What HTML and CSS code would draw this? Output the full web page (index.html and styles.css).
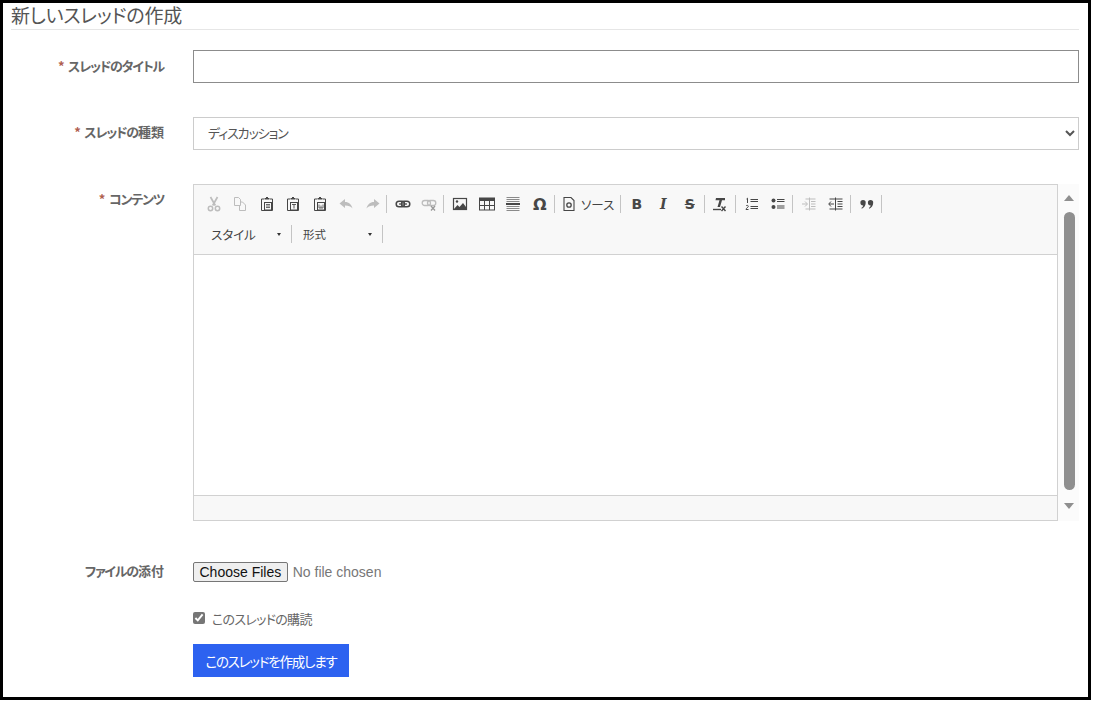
FILE: index.html
```html
<!DOCTYPE html>
<html lang="ja">
<head>
<meta charset="utf-8">
<title>新しいスレッドの作成</title>
<link rel="stylesheet" href="styles.css">
</head>
<body>
<main class="frame">
  <h1 class="title">新しいスレッドの作成</h1>
  <form class="form">
    <div class="row row-title">
      <label class="label" for="t"><span class="req">*</span> スレッドのタイトル</label>
      <input class="text-input" id="t" type="text">
    </div>
    <div class="row row-type">
      <label class="label" for="k"><span class="req">*</span> スレッドの<span class="kj">種類</span></label>
      <select class="select" id="k"><option>ディスカッション</option></select>
    </div>
    <div class="row row-content">
      <label class="label label-content"><span class="req">*</span> コンテンツ</label>
      <div class="editor-wrap">
        <div class="editor">
          <div class="toolbar">
            <div class="tool-line">
              <span class="btn dim"><svg viewBox="0 0 16 16"><path d="M4.500 1l4.800 8.500M11.500 1L6.700 9.500" fill="none" stroke="currentColor" stroke-width="1.700"/><circle cx="4.500" cy="12.500" r="2.200" fill="none" stroke="currentColor" stroke-width="1.500"/><circle cx="11.500" cy="12.500" r="2.200" fill="none" stroke="currentColor" stroke-width="1.500"/></svg></span>
              <span class="btn dim"><svg viewBox="0 0 16 16"><path d="M2.500 1.500h4l2 2v6h-6zM8.500 6h2l3 3v5.500h-6v-5" fill="none" stroke="currentColor" stroke-width="1"/></svg></span>
              <span class="btn"><svg viewBox="0 0 16 16"><path d="M5 3H2.500v11.500h11V3H11" fill="none" stroke="currentColor"/><path d="M5.500 3.500V2h1.500V1h2v1h1.500v1.500z" fill="currentColor"/><rect x="5.500" y="6.500" width="7" height="7.500" fill="#f8f8f8" stroke="currentColor"/><path d="M7 8.500h4M7 10h4M7 11.500h4" stroke="currentColor" stroke-width=".8"/></svg></span>
              <span class="btn"><svg viewBox="0 0 16 16"><path d="M5 3H2.500v11.500h11V3H11" fill="none" stroke="currentColor"/><path d="M5.500 3.500V2h1.500V1h2v1h1.500v1.500z" fill="currentColor"/><rect x="5.500" y="6.500" width="7" height="7.500" fill="#f8f8f8" stroke="currentColor"/><path d="M7 8.500h4M9 8.500v4" stroke="currentColor" stroke-width=".9"/></svg></span>
              <span class="btn"><svg viewBox="0 0 16 16"><path d="M5 3H2.500v11.500h11V3H11" fill="none" stroke="currentColor"/><path d="M5.500 3.500V2h1.500V1h2v1h1.500v1.500z" fill="currentColor"/><rect x="5.500" y="6.500" width="7" height="7.500" fill="#f8f8f8" stroke="currentColor"/><path d="M7 8.500v3.500h4V8.500M9 9.500V12" fill="none" stroke="currentColor" stroke-width=".8"/></svg></span>
              <span class="btn dim"><svg viewBox="0 0 16 16"><path d="M1.500 7.500L7 3v3c4 0 6.500 2.500 7.500 6.500-1.800-2.300-4-3-7.500-3V12z" fill="currentColor"/></svg></span>
              <span class="btn dim"><svg viewBox="0 0 16 16"><path d="M14.500 7.500L9 3v3c-4 0-6.500 2.500-7.500 6.500 1.800-2.300 4-3 7.500-3V12z" fill="currentColor"/></svg></span>
              <span class="sep sep-first"></span>
              <span class="btn"><svg viewBox="0 0 16 16"><rect x="1.200" y="5.200" width="8.300" height="5.600" rx="2.800" fill="none" stroke="currentColor" stroke-width="1.500"/><rect x="6.500" y="5.200" width="8.300" height="5.600" rx="2.800" fill="none" stroke="currentColor" stroke-width="1.500"/><path d="M4 8h8" stroke="currentColor" stroke-width="1.200"/></svg></span>
              <span class="btn dim"><svg viewBox="0 0 16 16"><rect x="1.200" y="4.500" width="8.300" height="5" rx="2.500" fill="none" stroke="currentColor" stroke-width="1.300"/><rect x="6.500" y="4.500" width="8.300" height="5" rx="2.500" fill="none" stroke="currentColor" stroke-width="1.300"/><path d="M10 10l4 4.500M14 10l-4 4.500" stroke="#999" stroke-width="1.300"/></svg></span>
              <span class="sep"></span>
              <span class="btn"><svg viewBox="0 0 16 16"><rect x="1.500" y="2.500" width="13" height="11" fill="none" stroke="currentColor" stroke-width="1.200"/><path d="M2 13l3.500-4 2 2L11 7l3 4v2z" fill="currentColor"/><circle cx="5" cy="5.500" r="1.200" fill="currentColor"/></svg></span>
              <span class="btn"><svg viewBox="0 0 16 16"><rect x=".5" y="2" width="15" height="12" fill="none" stroke="currentColor"/><rect x=".5" y="2" width="15" height="3" fill="currentColor"/><path d="M5.500 5v9M10.500 5v9M1 9.500h14" stroke="currentColor"/></svg></span>
              <span class="btn"><svg viewBox="0 0 16 16"><path d="M1.500 1.500h13M1.500 3.500h13M1.500 5.500h13M1.500 10.500h13M1.500 12.500h13M1.500 14.500h13" stroke="#8a8a8a"/><path d="M1 8h14" stroke="currentColor" stroke-width="2"/></svg></span>
              <span class="btn btn-omega">Ω</span>
              <span class="sep"></span>
              <span class="btn btn-source"><svg viewBox="0 0 16 16"><path d="M3 1.500h7l3 3v10H3z" fill="none" stroke="currentColor" stroke-width="1.100"/><circle cx="8" cy="9" r="2.200" fill="none" stroke="currentColor" stroke-width="1.300"/></svg><span class="source-text">ソース</span></span>
              <span class="sep"></span>
              <span class="btn btn-b">B</span>
              <span class="btn btn-i">I</span>
              <span class="btn btn-s"><s>S</s></span>
              <span class="sep"></span>
              <span class="btn btn-tx"><svg viewBox="0 0 16 16"><path d="M5 2h9v2.200h-3L9 11H6.500L8.500 4.200H4.500z" fill="currentColor"/><path d="M2 13.500h8" stroke="currentColor" stroke-width="1.400"/><path d="M10.500 10.500l4 4.500M14.500 10.500l-4 4.500" stroke="currentColor" stroke-width="1.400"/></svg></span>
              <span class="sep"></span>
              <span class="btn"><svg viewBox="0 0 16 16"><path d="M6.500 3.500H14M6.500 5.500H14M6.500 10.500H14M6.500 12.500H14" stroke="currentColor"/><path d="M2.500 3l1-.8V7M2 10c.5-1 2.500-.8 2.300.5-.1 1-2.300 1.500-2.300 3h2.500" fill="none" stroke="currentColor"/></svg></span>
              <span class="btn"><svg viewBox="0 0 16 16"><circle cx="3.500" cy="4.500" r="2" fill="currentColor"/><circle cx="3.500" cy="11" r="2" fill="currentColor"/><path d="M7 3.500h7.500M7 5.500h7.500M7 10h7.500M7 12h7.500" stroke="currentColor"/></svg></span>
              <span class="sep"></span>
              <span class="btn dim"><svg viewBox="0 0 16 16"><path d="M8.500 1.500v13M1 8h5M4 5.500L6.500 8 4 10.500M4.500 3h10M4.500 13h10M10 5.500h4.500M10 8h4.500M10 10.500h4.500" fill="none" stroke="currentColor"/></svg></span>
              <span class="btn btn-indent"><svg viewBox="0 0 16 16"><path d="M7.500 1.500v13M1 8h5M3 5.500L.7 8 3 10.500M1.500 3h13M1.500 13h13M9.500 5.500h5M9.500 8h5M9.500 10.500h5" fill="none" stroke="currentColor"/></svg></span>
              <span class="sep"></span>
              <span class="btn"><svg viewBox="0 0 16 16"><path d="M4 4a2.700 2.700 0 0 1 2.700 2.800C6.700 9.500 5 12 2.800 12.700l-.4-.9c1-.6 1.700-1.500 1.800-2.400A2.700 2.700 0 0 1 4 4zM11.500 4a2.700 2.700 0 0 1 2.700 2.800c0 2.700-1.700 5.200-3.900 5.900l-.4-.9c1-.6 1.700-1.500 1.800-2.400A2.700 2.700 0 0 1 11.500 4z" fill="currentColor"/></svg></span>
              <span class="sep"></span>
            </div>
            <div class="tool-line tool-line-2">
              <span class="combo combo-style">スタイル<i class="caret"></i></span>
              <span class="sep"></span>
              <span class="combo combo-format">形式<i class="caret"></i></span>
              <span class="sep"></span>
            </div>
          </div>
          <div class="content"></div>
          <div class="statusbar"></div>
        </div>
        <div class="scrollbar">
          <i class="arrow-up"></i>
          <i class="thumb"></i>
          <i class="arrow-down"></i>
        </div>
      </div>
    </div>
    <div class="row row-file">
      <label class="label">ファイルの<span class="kj">添付</span></label>
      <input class="file" type="file" multiple>
    </div>
    <div class="row row-check">
      <span></span>
      <label class="check"><input class="checkbox" type="checkbox" checked>このスレッドの購読</label>
    </div>
    <div class="row row-submit">
      <span></span>
      <button class="submit" type="button">このスレッドを作成します</button>
    </div>
  </form>
</main>
</body>
</html>
```
FILE: styles.css
```css
* { box-sizing: border-box; }
html, body { margin: 0; padding: 0; background: #fff; }
body {
  width: 1094px;
  height: 702px;
  overflow: hidden;
  font-family: "Noto Sans CJK JP", "Noto Sans", sans-serif;
  font-feature-settings: "palt";
  color: #666;
}
.frame {
  width: 1091px;
  height: 700px;
  border: 3px solid #000;
  padding: 0 9px 0 8px;
  background: #fff;
}
.title {
  margin: 0;
  height: 27px;
  border-bottom: 1px solid #e6e6e6;
  font-size: 19px;
  line-height: 24px;
  font-weight: 400;
  color: #555;
  letter-spacing: -0.2px;
}
.form { display: flex; flex-direction: column; }
.row {
  display: grid;
  grid-template-columns: 154px 1fr;
  column-gap: 28px;
}
.row-title { margin-top: 20px; height: 33px; align-items: center; }
.row-type { margin-top: 34px; height: 33px; align-items: center; }
.row-content { margin-top: 34px; height: 337px; }
.row-file { margin-top: 41px; height: 20px; align-items: center; }
.row-check { margin-top: 28px; height: 20px; align-items: center; }
.row-submit { margin-top: 14px; }
.label {
  text-align: right;
  font-size: 13px;
  line-height: 20px;
  font-weight: 700;
  color: #666;
  letter-spacing: -1.2px;
  padding-right: 1px;
  position: relative;
  top: -1px;
}
.row-type .label { top: -2px; }
.kj { letter-spacing: 0; }
.label-content { margin-top: 6px; }
.req { color: #b0604f; margin-right: 3px; }
.text-input {
  width: 886px;
  height: 33px;
  border: 1px solid #8c8c8c;
  background: #fff;
  outline: none;
}
.select {
  width: 886px;
  height: 33px;
  border: 1px solid #ccc;
  background: #fff;
  padding: 0 0 2px 10px;
  font-family: "Noto Sans CJK JP", sans-serif;
  font-feature-settings: "palt";
  font-size: 13px;
  color: #555;
  letter-spacing: -1.1px;
}
.editor-wrap { display: flex; width: 886px; height: 337px; }
.editor {
  width: 865px;
  height: 337px;
  border: 1px solid #d1d1d1;
  display: flex;
  flex-direction: column;
}
.toolbar {
  height: 70px;
  background: #f8f8f8;
  border-bottom: 1px solid #d1d1d1;
  padding: 6px 0 0 6.500px;
  flex: none;
}
.tool-line { display: flex; align-items: center; height: 26px; color: #474747; }
.tool-line-2 { margin-top: 4px; padding-left: 10.500px; }
.btn {
  width: 26.500px;
  height: 26px;
  display: flex;
  align-items: center;
  justify-content: center;
  flex: none;
  color: #474747;
}
.btn svg { width: 16px; height: 16px; display: block; flex: none; }
.dim { color: #bdbdbd; }
.sep { width: 1px; height: 18px; background: #c4c4c4; flex: none; margin: 0 3px 0 .5px; }
.sep-first { margin-left: -.5px; }
.tool-line-2 .sep { margin: 0 11px 0 0; }
.btn-omega { font-family: "DejaVu Sans", sans-serif; font-weight: 700; font-size: 16px; }
.btn-source { width: 61.500px; justify-content: flex-start; padding-left: 3.500px; gap: 4px; }
.source-text { font-size: 12.500px; color: #444; white-space: nowrap; }
.btn-b, .btn-i, .btn-s { font-family: "DejaVu Sans", sans-serif; font-weight: 700; font-size: 14px; color: #474747; }
.btn-i { font-style: italic; font-family: "DejaVu Serif", serif; font-size: 14px; }
.btn-s s { padding: 0 1px; }
.btn-tx svg { margin-right: 3px; }
.combo {
  display: flex;
  align-items: center;
  justify-content: space-between;
  font-size: 12.500px;
  color: #444;
  flex: none;
  padding-right: 10px;
}
.combo-style { width: 80px; }
.combo-format { width: 79px; font-size: 11.500px; }
.caret {
  width: 0;
  height: 0;
  border-left: 2.500px solid transparent;
  border-right: 2.500px solid transparent;
  border-top: 3px solid #333;
}
.content { flex: 1; background: #fff; border-bottom: 1px solid #d1d1d1; }
.statusbar { height: 24px; background: #f8f8f8; flex: none; }
.scrollbar {
  width: 21px;
  height: 337px;
  padding-left: 1px;
  background: #fbfbfb;
  display: flex;
  flex-direction: column;
  align-items: center;
}
.arrow-up {
  margin-top: 11px;
  border-left: 5.500px solid transparent;
  border-right: 5.500px solid transparent;
  border-bottom: 6px solid #8f8f8f;
}
.thumb {
  margin-top: 11px;
  width: 11px;
  height: 278px;
  border-radius: 6px;
  background: #8f8f8f;
}
.arrow-down {
  margin-top: 13px;
  border-left: 5.500px solid transparent;
  border-right: 5.500px solid transparent;
  border-top: 6px solid #8f8f8f;
}
.file { font-family: "Liberation Sans", sans-serif; font-size: 14px; color: #777; width: 300px; height: 20px; }
.file::file-selector-button { padding: 0 5.500px; height: 20px; margin-right: 5px; border: 1px solid #767676; border-radius: 2px; background: #efefef; color: #111; }
.check { display: flex; align-items: center; font-size: 13px; color: #666; letter-spacing: -0.7px; position: relative; top: -2px; }
.checkbox { margin: 0 7px 0 0; width: 12px; height: 12px; accent-color: #767676; }
.submit {
  width: 156px;
  height: 33px;
  border: 0;
  background: #2d62f0;
  color: #fff;
  font-family: "Noto Sans CJK JP", sans-serif;
  font-feature-settings: "palt";
  font-size: 13.500px;
  font-weight: 400;
  letter-spacing: -1.2px;
  padding: 0;
}
```
